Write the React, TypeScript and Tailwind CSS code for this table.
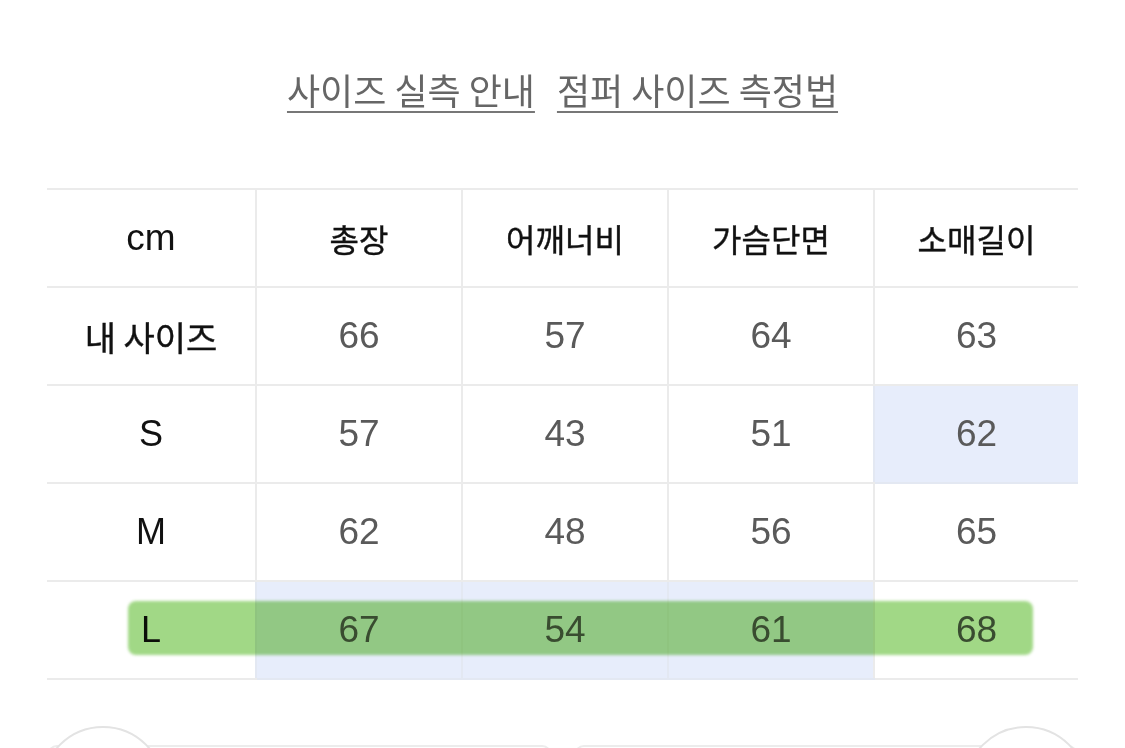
import React from "react"

const heads = ["총장", "어깨너비", "가슴단면", "소매길이"]

const rows: { label: string; ko?: boolean; vals: string[]; blue: number[] }[] = [
  { label: "내 사이즈", ko: true, vals: ["66", "57", "64", "63"], blue: [] },
  { label: "S", vals: ["57", "43", "51", "62"], blue: [3] },
  { label: "M", vals: ["62", "48", "56", "65"], blue: [] },
  { label: "L", vals: ["67", "54", "61", "68"], blue: [0, 1, 2] },
]

const font = { fontFamily: '"Liberation Sans", "Noto Sans CJK KR", sans-serif' }
const koFont = { fontFamily: '"Noto Sans CJK KR", sans-serif' }

export default function App() {
  return (
    <div className="w-[1125px] h-[748px] overflow-hidden bg-white" style={font}>
      {/* links */}
      <div className="pt-[68px] flex justify-center gap-[22px] text-[36px] leading-[42px] text-[#666]" style={koFont}>
        <span className="underline decoration-2 underline-offset-[6px] decoration-[#777]">사이즈 실측 안내</span>
        <span className="underline decoration-2 underline-offset-[6px] decoration-[#777]">점퍼 사이즈 측정법</span>
      </div>

      {/* table */}
      <div className="relative mt-[78px] ml-[47px] w-[1031px]">
        <table className="w-full border-collapse table-fixed border-t-2 border-[#ebebeb]">
          <colgroup>
            <col className="w-[209px]" />
            <col className="w-[206px]" />
            <col className="w-[206px]" />
            <col className="w-[206px]" />
            <col className="w-[204px]" />
          </colgroup>
          <thead>
            <tr className="h-[98px]">
              <th className="border-b-2 border-[#ebebeb] font-normal text-[37px] text-[#111]">cm</th>
              {heads.map((h) => (
                <th
                  key={h}
                  className="border-b-2 border-l-2 border-[#ebebeb] font-normal text-[32px] text-[#111] [-webkit-text-stroke:0.4px_#111]"
                  style={koFont}
                >
                  {h}
                </th>
              ))}
            </tr>
          </thead>
          <tbody>
            {rows.map((r) => (
              <tr key={r.label} className="h-[98px]">
                <td
                  className={`border-b-2 border-[#ebebeb] text-center text-[#111] ${r.ko ? "text-[34px] [-webkit-text-stroke:0.4px_#111]" : "text-[36px]"}`}
                  style={r.ko ? koFont : undefined}
                >
                  {r.label}
                </td>
                {r.vals.map((v, i) => (
                  <td
                    key={i}
                    className={`border-b-2 border-l-2 text-center text-[37px] text-[#5a5a5a] ${
                      r.blue.includes(i) ? "bg-[#e7edfb] border-[#e3e8f2]" : "border-[#ebebeb]"
                    }`}
                  >
                    {v}
                  </td>
                ))}
              </tr>
            ))}
          </tbody>
        </table>

        {/* highlighter stroke */}
        <div className="absolute left-[81px] top-[413px] w-[905px] h-[54px] rounded-[8px] bg-[#a1d886] mix-blend-multiply blur-[1.5px]" />
      </div>

      {/* bottom cards */}
      <div className="mt-[65px] ml-[47px] w-[1031px] flex gap-[22px]">
        <div className="relative flex-1 h-[80px] rounded-t-[10px] border-2 border-[#ececec]">
          <div className="absolute left-[-8px] top-[-21px] w-[124px] h-[124px] rounded-full border-2 border-[#e3e3e3] bg-white" />
        </div>
        <div className="relative flex-1 h-[80px] rounded-t-[10px] border-2 border-[#ececec]">
          <div className="absolute left-[388px] top-[-21px] w-[124px] h-[124px] rounded-full border-2 border-[#e3e3e3] bg-white" />
        </div>
      </div>
    </div>
  )
}
